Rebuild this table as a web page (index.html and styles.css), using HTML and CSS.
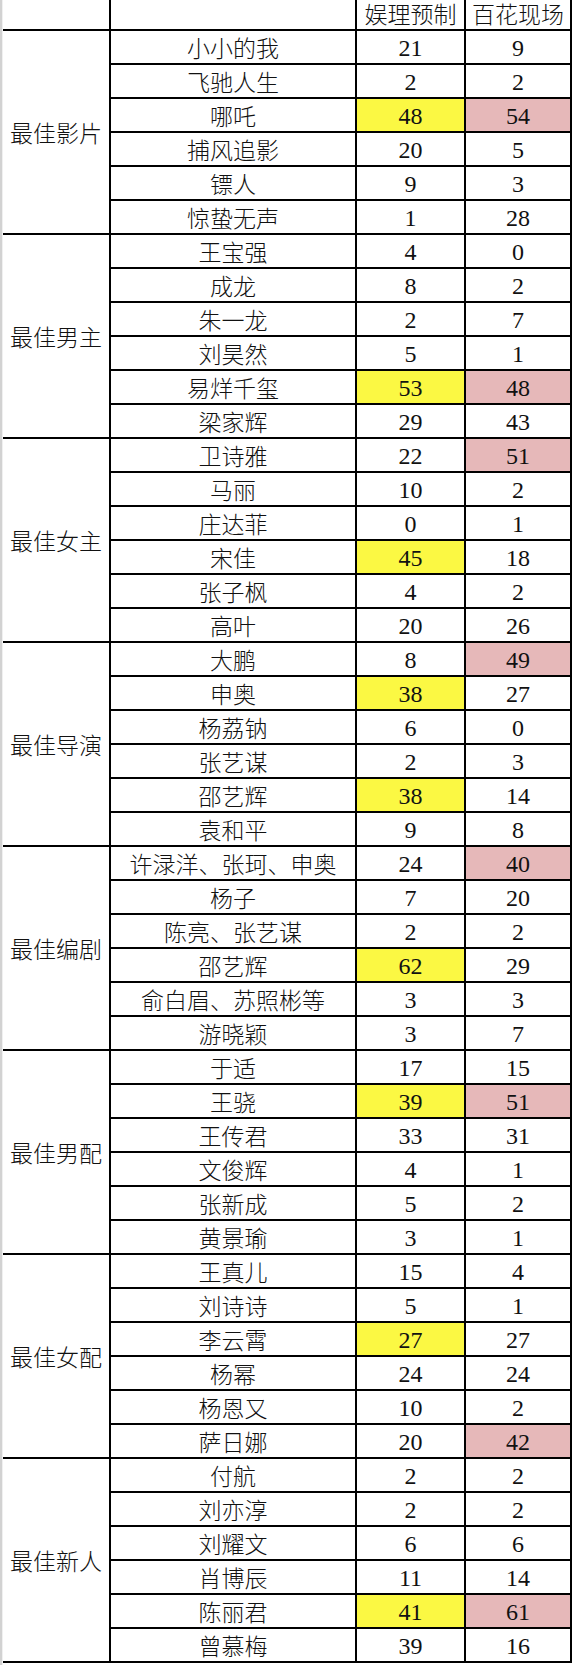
FILE: index.html
```html
<!DOCTYPE html>
<html lang="zh">
<head>
<meta charset="utf-8">
<link rel="stylesheet" href="styles.css">
</head>
<body>
<div class="page">
  <div class="edge"></div>
  <div class="sheet">
    <div class="c hd"></div>
    <div class="c hd"></div>
    <div class="c hd zh">娱理预制</div>
    <div class="c hd zh">百花现场</div>

    <div class="c cat zh">最佳影片</div>
    <div class="c zh">小小的我</div><div class="c num">21</div><div class="c num">9</div>
    <div class="c zh">飞驰人生</div><div class="c num">2</div><div class="c num">2</div>
    <div class="c zh">哪吒</div><div class="c num y">48</div><div class="c num p">54</div>
    <div class="c zh">捕风追影</div><div class="c num">20</div><div class="c num">5</div>
    <div class="c zh">镖人</div><div class="c num">9</div><div class="c num">3</div>
    <div class="c zh">惊蛰无声</div><div class="c num">1</div><div class="c num">28</div>

    <div class="c cat zh">最佳男主</div>
    <div class="c zh">王宝强</div><div class="c num">4</div><div class="c num">0</div>
    <div class="c zh">成龙</div><div class="c num">8</div><div class="c num">2</div>
    <div class="c zh">朱一龙</div><div class="c num">2</div><div class="c num">7</div>
    <div class="c zh">刘昊然</div><div class="c num">5</div><div class="c num">1</div>
    <div class="c zh">易烊千玺</div><div class="c num y">53</div><div class="c num p">48</div>
    <div class="c zh">梁家辉</div><div class="c num">29</div><div class="c num">43</div>

    <div class="c cat zh">最佳女主</div>
    <div class="c zh">卫诗雅</div><div class="c num">22</div><div class="c num p">51</div>
    <div class="c zh">马丽</div><div class="c num">10</div><div class="c num">2</div>
    <div class="c zh">庄达菲</div><div class="c num">0</div><div class="c num">1</div>
    <div class="c zh">宋佳</div><div class="c num y">45</div><div class="c num">18</div>
    <div class="c zh">张子枫</div><div class="c num">4</div><div class="c num">2</div>
    <div class="c zh">高叶</div><div class="c num">20</div><div class="c num">26</div>

    <div class="c cat zh">最佳导演</div>
    <div class="c zh">大鹏</div><div class="c num">8</div><div class="c num p">49</div>
    <div class="c zh">申奥</div><div class="c num y">38</div><div class="c num">27</div>
    <div class="c zh">杨荔钠</div><div class="c num">6</div><div class="c num">0</div>
    <div class="c zh">张艺谋</div><div class="c num">2</div><div class="c num">3</div>
    <div class="c zh">邵艺辉</div><div class="c num y">38</div><div class="c num">14</div>
    <div class="c zh">袁和平</div><div class="c num">9</div><div class="c num">8</div>

    <div class="c cat zh">最佳编剧</div>
    <div class="c zh">许渌洋、张珂、申奥</div><div class="c num">24</div><div class="c num p">40</div>
    <div class="c zh">杨子</div><div class="c num">7</div><div class="c num">20</div>
    <div class="c zh">陈亮、张艺谋</div><div class="c num">2</div><div class="c num">2</div>
    <div class="c zh">邵艺辉</div><div class="c num y">62</div><div class="c num">29</div>
    <div class="c zh">俞白眉、苏照彬等</div><div class="c num">3</div><div class="c num">3</div>
    <div class="c zh">游晓颖</div><div class="c num">3</div><div class="c num">7</div>

    <div class="c cat zh">最佳男配</div>
    <div class="c zh">于适</div><div class="c num">17</div><div class="c num">15</div>
    <div class="c zh">王骁</div><div class="c num y">39</div><div class="c num p">51</div>
    <div class="c zh">王传君</div><div class="c num">33</div><div class="c num">31</div>
    <div class="c zh">文俊辉</div><div class="c num">4</div><div class="c num">1</div>
    <div class="c zh">张新成</div><div class="c num">5</div><div class="c num">2</div>
    <div class="c zh">黄景瑜</div><div class="c num">3</div><div class="c num">1</div>

    <div class="c cat zh">最佳女配</div>
    <div class="c zh">王真儿</div><div class="c num">15</div><div class="c num">4</div>
    <div class="c zh">刘诗诗</div><div class="c num">5</div><div class="c num">1</div>
    <div class="c zh">李云霄</div><div class="c num y">27</div><div class="c num">27</div>
    <div class="c zh">杨幂</div><div class="c num">24</div><div class="c num">24</div>
    <div class="c zh">杨恩又</div><div class="c num">10</div><div class="c num">2</div>
    <div class="c zh">萨日娜</div><div class="c num">20</div><div class="c num p">42</div>

    <div class="c cat zh">最佳新人</div>
    <div class="c zh">付航</div><div class="c num">2</div><div class="c num">2</div>
    <div class="c zh">刘亦淳</div><div class="c num">2</div><div class="c num">2</div>
    <div class="c zh">刘耀文</div><div class="c num">6</div><div class="c num">6</div>
    <div class="c zh">肖博辰</div><div class="c num">11</div><div class="c num">14</div>
    <div class="c zh">陈丽君</div><div class="c num y">41</div><div class="c num p">61</div>
    <div class="c zh">曾慕梅</div><div class="c num">39</div><div class="c num">16</div>
  </div>
</div>
</body>
</html>
```

FILE: styles.css
```css
html, body {
  margin: 0;
  padding: 0;
  background: #ffffff;
}

.page {
  display: flex;
  align-items: flex-start;
  width: 573px;
  height: 1665px;
  background: #ffffff;
}

.edge {
  width: 3px;
  align-self: stretch;
  background: linear-gradient(to right, #d2d2d2 0, #d2d2d2 2px, #f0f0f0 2px);
}

.sheet {
  display: grid;
  grid-template-columns: 106px 244px 107px 104px;
  grid-template-rows: 29px repeat(48, 32px);
  gap: 2px;
  padding: 0 2px 2px 0;
  background: #000000;
}

.c {
  background: #ffffff;
  color: #111111;
  display: flex;
  align-items: center;
  justify-content: center;
  white-space: nowrap;
}

.zh {
  font-family: "Noto Sans CJK SC", "Noto Sans CJK JP", sans-serif;
  font-size: 23px;
  font-weight: 300;
  line-height: 1;
}

.num {
  font-family: "Liberation Serif", "Times New Roman", serif;
  font-size: 24px;
  line-height: 1;
  padding-top: 1px;
}

.hd.zh {
  padding-bottom: 2px;
}

.cat {
  grid-row: span 6;
}

.y {
  background: #fbf843;
}

.p {
  background: #e6b8b9;
}
```
